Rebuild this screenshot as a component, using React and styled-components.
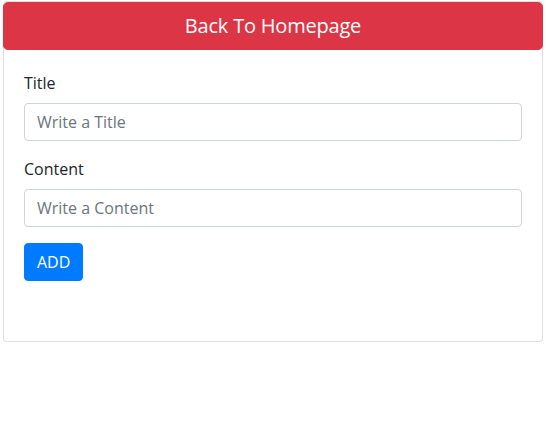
import React from "react";
import styled, { createGlobalStyle } from "styled-components";

const Global = createGlobalStyle`
  html, body { margin: 0; padding: 0; background: #fff; }
  body {
    font-family: "Open Sans", "Noto Sans", sans-serif;
    font-size: 16px;
    line-height: 1.5;
    color: #212529;
  }
  * { box-sizing: border-box; }
`;

const Page = styled.div`
  padding: 1px 3px;
`;

const Card = styled.div`
  display: flex;
  flex-direction: column;
  height: 341px;
  border: 1px solid rgba(0, 0, 0, 0.125);
  border-radius: 4px;
  background: #fff;
`;

const HomeButton = styled.button`
  display: block;
  width: calc(100% + 2px);
  margin: 0 -1px;
  height: 48px;
  padding: 8px 16px;
  font-family: inherit;
  font-size: 20px;
  line-height: 1.5;
  letter-spacing: -0.2px;
  color: #fff;
  background: #dc3545;
  border: 1px solid #dc3545;
  border-radius: 4.8px;
  text-align: center;
  cursor: pointer;
`;

const Body = styled.form`
  padding: 21px 20px 20px;
  display: flex;
  flex-direction: column;
  align-items: flex-start;
`;

const Group = styled.div`
  width: 100%;
  margin-bottom: 16px;
`;

const Label = styled.label`
  display: block;
  margin-bottom: 8px;
  font-size: 16px;
  line-height: 24px;
  color: #212529;
`;

const Input = styled.input`
  display: block;
  width: 100%;
  height: 38px;
  padding: 6px 12px;
  font-family: inherit;
  font-size: 16px;
  line-height: 1.5;
  color: #495057;
  background: #fff;
  border: 1px solid #ced4da;
  border-radius: 4px;
  outline: none;
  &::placeholder { color: #6c757d; opacity: 1; }
`;

const AddButton = styled.button`
  height: 38px;
  padding: 6px 12px;
  font-family: inherit;
  font-size: 16px;
  line-height: 1.5;
  color: #fff;
  background: #007bff;
  border: 1px solid #007bff;
  border-radius: 4px;
  cursor: pointer;
`;

export default function App() {
  return (
    <>
      <Global />
      <Page>
        <Card>
          <HomeButton type="button">Back To Homepage</HomeButton>
          <Body onSubmit={(e) => e.preventDefault()}>
            <Group>
              <Label>Title</Label>
              <Input placeholder="Write a Title" />
            </Group>
            <Group>
              <Label>Content</Label>
              <Input placeholder="Write a Content" />
            </Group>
            <AddButton type="submit">ADD</AddButton>
          </Body>
        </Card>
      </Page>
    </>
  );
}
